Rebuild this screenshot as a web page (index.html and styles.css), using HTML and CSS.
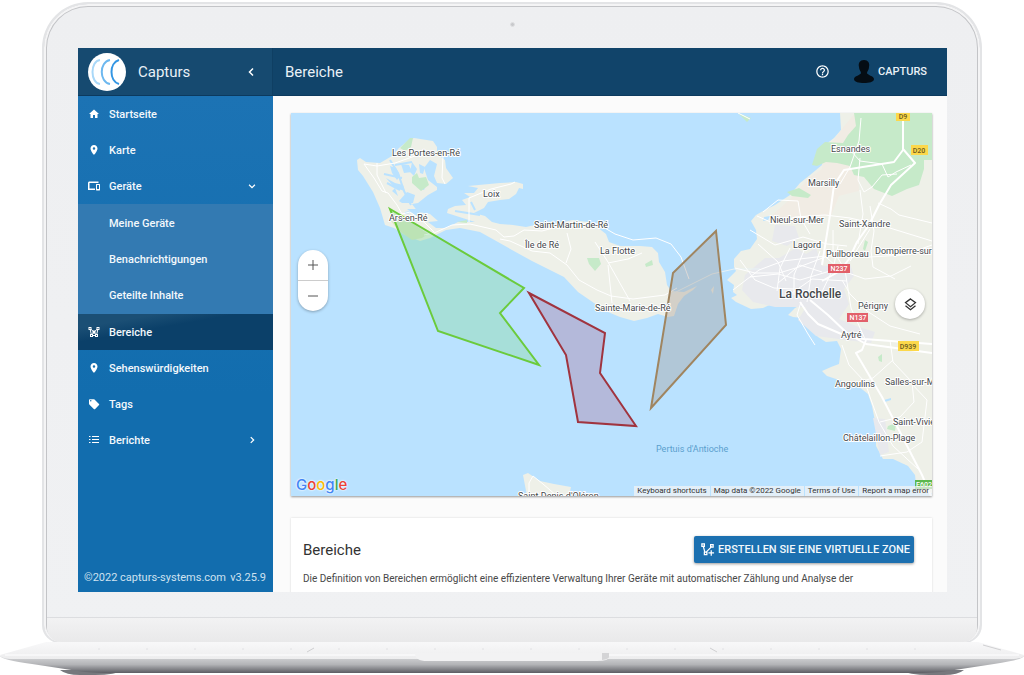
FILE: index.html
```html
<!DOCTYPE html>
<html lang="de">
<head>
  <meta charset="UTF-8">
  <title>Capturs - Bereiche</title>
  <link rel="stylesheet" href="styles.css">
</head>
<body>
  <div class="laptop">
    <div class="lid">
      <div class="camera"></div>
      <div class="screen">
        <header class="brand">
          <svg class="logo" viewBox="0 0 38 38">
            <circle cx="19" cy="19" r="19" fill="#fff"/>
            <g fill="none" stroke-width="2">
              <path d="M12 7C2 8 2 30 12 31" stroke="#a9d8f8"/>
              <path d="M22 7C11 9 11 29 22 31" stroke="#6db8ef"/>
              <path d="M31 7C21 10 21 28 31 31" stroke="#3496e3"/>
            </g>
          </svg>
          <span class="brand-name">Capturs</span>
          <button type="button" class="icon-btn" aria-label="Menü einklappen">
            <svg class="icon" viewBox="0 0 24 24"><path d="M16 5l-7 7 7 7" class="line"/></svg>
          </button>
        </header>

        <header class="topbar">
          <h1>Bereiche</h1>
          <button type="button" class="icon-btn help" aria-label="Hilfe">
            <svg viewBox="0 0 24 24"><path d="M11 18h2v-2h-2v2zm1-16C6.480 2 2 6.480 2 12s4.480 10 10 10 10-4.480 10-10S17.520 2 12 2zm0 18c-4.410 0-8-3.590-8-8s3.590-8 8-8 8 3.590 8 8-3.590 8-8 8zm0-14c-2.210 0-4 1.790-4 4h2c0-1.100.9-2 2-2s2 .9 2 2c0 2-3 1.750-3 5h2c0-2.250 3-2.500 3-5 0-2.210-1.790-4-4-4z"/></svg>
          </button>
          <a href="#" class="user">
            <svg viewBox="0 0 20 24"><path d="M10 0c4 0 6 3 5 7 0 3-2 4-2 6 0 2 7 3 7 6 0 3-5 4-10 4S0 22 0 19c0-3 7-4 7-6 0-2-2-3-2-6-1-4 1-7 5-7z"/></svg>
            CAPTURS
          </a>
        </header>

        <aside class="sidebar">
          <nav>
            <a href="#" class="item">
              <svg class="icon" viewBox="0 0 24 24"><path d="M10 20v-6h4v6h5v-8h3L12 3 2 12h3v8z"/></svg>
              <span>Startseite</span>
            </a>
            <a href="#" class="item">
              <svg class="icon" viewBox="0 0 24 24"><path d="M12 2C8.130 2 5 5.130 5 9c0 5.250 7 13 7 13s7-7.750 7-13c0-3.870-3.130-7-7-7zm0 9.500a2.500 2.500 0 0 1 0-5 2.500 2.500 0 0 1 0 5z"/></svg>
              <span>Karte</span>
            </a>
            <button type="button" class="item">
              <svg class="icon" viewBox="0 0 24 24"><path d="M3 6h18V3H3c-1.700 0-3 1.300-3 3v14h14v-3H3V6zm20 2h-6c-.5 0-1 .5-1 1v11c0 .5.500 1 1 1h6c.5 0 1-.5 1-1V9c0-.5-.5-1-1-1zm-1 10h-4v-8h4v8z"/></svg>
              <span>Geräte</span>
              <svg class="arrow" viewBox="0 0 24 24"><path d="M5 9l7 7 7-7" class="line"/></svg>
            </button>
            <div class="submenu">
              <a href="#" class="item">Meine Geräte</a>
              <a href="#" class="item">Benachrichtigungen</a>
              <a href="#" class="item">Geteilte Inhalte</a>
            </div>
            <a href="#" class="item active">
              <svg class="icon" viewBox="0 0 24 24"><path d="M4 5l3 14h10l3-14M4 5l8 7 8-7M7 19l5-7 5 7" fill="none" stroke="#fff" stroke-width="2"/><path d="M1 2h6v6H1zM17 2h6v6h-6zM4 16h6v6H4zM14 16h6v6h-6zM9 9h6v6H9z"/><path d="M3 4h2v2H3zM19 4h2v2h-2zM6 18h2v2H6zM16 18h2v2h-2z" fill="#0b4069"/></svg>
              <span>Bereiche</span>
            </a>
            <a href="#" class="item">
              <svg class="icon" viewBox="0 0 24 24"><path d="M12 2C8.130 2 5 5.130 5 9c0 5.250 7 13 7 13s7-7.750 7-13c0-3.870-3.130-7-7-7zm0 9.500a2.500 2.500 0 0 1 0-5 2.500 2.500 0 0 1 0 5z"/></svg>
              <span>Sehenswürdigkeiten</span>
            </a>
            <a href="#" class="item">
              <svg class="icon" viewBox="0 0 24 24"><path d="M22 12l-9-9c-.4-.4-.9-.6-1.400-.6H4c-1.100 0-2 .9-2 2v7c0 .5.200 1 .6 1.400l9 9c.8.8 2 .8 2.800 0l7.600-7.600c.7-.7.7-1.500 0-2.200zM5.500 7a1.500 1.500 0 1 1 0-3 1.500 1.500 0 0 1 0 3z"/></svg>
              <span>Tags</span>
            </a>
            <button type="button" class="item">
              <svg class="icon" viewBox="0 0 24 24"><path d="M2 4h3v2H2zM2 10h3v2H2zM2 16h3v2H2zM8 4h14v2H8zM8 10h14v2H8zM8 16h14v2H8z"/></svg>
              <span>Berichte</span>
              <svg class="arrow" viewBox="0 0 24 24"><path d="M9 5l7 7-7 7" class="line"/></svg>
            </button>
          </nav>
          <footer class="copyright">
            <span>©2022 capturs-systems.com</span>
            <span>v3.25.9</span>
          </footer>
        </aside>

        <main>
          <div class="map">
            <svg class="map-tiles" viewBox="291 113 641 383" preserveAspectRatio="xMidYMid slice">
              <!-- mainland -->
              <path class="land" d="M840 113l1 17-7 8-9 7-3 20-12 10-10 8-10 12-15 10-10 5-9 5-5 6 5 9 1 9-7 10-9 2-7 8v8l2 4-9 9 7 5-1 7 4 3-6 3 5 4 15 7 12-1 13-6 14-4 12-1-1 8-6 3-7 7 5 2 9 1 9 11 7 8 8 5 11-1 4 8-2 15-8 3-9 4 5 5 12 4 19 6 10 8 4 12 4 20v20l7 13h10l15 7 7 9 2 18h18V113z"/>
              <path class="beach" d="M841 130l14-17h7l-8 28 4 25 1 25-20 5-8 20-25 2-37 0 20-18 20-22 13-9 2-16z"/>
              <path class="green" d="M854 113h78v47l-8 0 0 9-5 16-12 4-15 7-18-7-10-12-10-2-4-9-13-3-11-1-9 4-5-1 5-16 8-7 18 1 5-8 8-9z"/>
              <path class="green" d="M787 192l12-4 12 7-3 3-16-2zM865 240l3 2-3 9-2-2zM888 426l8-3-1 8-8-2zM878 357l4-3v8l-3-1zM738 113l13 5-4 4zM805 284l5 4-4 6z"/>
              <path class="town" d="M745 275l20-17 14 0 17-10 10 6 10-6 6 18 28-2 4 12-10 13 5 15-10 15 20 8 16 5-4 11-25-3-30-4-18-16 8-13-31 0-22-5-11-12zM775 225l20 1 4 12-12 8-15-5zM873 418l12 1 4 33-9 3z"/>
              <path class="water" d="M764 217l6-1-2 4-5 1zM884 400l7-2v2l-6 2zM814 342l6-1 1 3-5 1zM903 464l4 2-1 3-4-1zM900 472l8 6 3 8-6-7z"/>

              <!-- Île de Ré -->
              <path class="land" d="M357 160L360 158L366 162L380 163L392 156L399 148L409 140L414 138L433 141L437 147L437 154L445 160L446 168L453 178L446 184L437 183L434 176L437 164L430 160L424 168L428 180L437 187L437 190L428 195L418 203L412 204L418 212L430 214L438 221L428 222L436 228L446 228L458 222L475 222L447 213L448 209L455 206L466 205L462 200L470 197L464 193L474 193L478 188L468 186L500 183L516 182L523 184L523 189L519 188L516 194L509 199L500 200L488 202L484 208L474 213L485 216L492 222L500 224L513 225L526 227L535 225L560 223L572 220L588 222L597 227L606 234L609 242L620 246L640 246L652 247L658 253L659 262L665 272L667 285L671 291L684 292L697 286L693 290L684 296L678 304L674 316L668 317L658 314L647 318L634 321L620 317L608 312L594 303L578 292L564 277L548 269L532 261L512 250L498 242L480 232L460 228L446 230L430 238L420 241L405 235L394 228L385 225L380 208L373 192L363 176L358 170Z"/>
              <path class="water" d="M390 166l6 2 4 8-3 4-5-7zM401 164l8 1 3 7-8 1zM386 178l9 5 8 2 2 6-10-3zM412 162l5 7-3 7-4-4zM419 164l6 3-2 7-3-1zM399 201l8-9 8 3-2 8-11 0zM407 209l9 0 5 5 7 4-3 2-10-5zM395 188l3 8-6-5zM416 183l4-4 3 6 4-2-3 7-6-2z"/>
              <path class="sea-line" d="M390 160l8 13 6 18 7 14M384 174l18 4M395 165l17-3M400 190l-13-7M405 213l20-4M455 211l25 4M471 202l4 8"/>
              <path class="green" d="M400 148l10-10h3l-2 9-6 4zM412 177l5-4 2 5 7-1 3 8-8 6-9-8zM587 258l12 0 2 6-6 7-6-7zM645 264l7-4 1 5-7 2zM457 222l10-2v3z"/>
              <path class="forest" d="M391 221l20 1 17 12-6 4-10 2-14-10z"/>
              <path class="land" d="M711 290l3-4-1 8z"/>
              <!-- Oléron -->
              <path class="land" d="M523 475l5-2 12 8 14 3 17 3-2 9h-42z"/>

              <!-- roads -->
              <g class="road">
                <path d="M364 164l13 2 18-3 20-7 30-2M364 164l10 14 8 13 6 2 9 12 5 9 8-2 15 11 9 9M424 235l10-2 18-8 18-1 26 6 8 7 10-1 10-6 18 1 15-4 20-4 21 1 17 10 18 6 23-2 15 6 10 13 8 22"/>
                <path d="M443 156l-1 22 3 6M469 222v-24l22-9 20-5 4-2M377 163v12l9 18M500 239l10 2 22 10 18 2 17 12 12 15 18 10 14 6 22 3 32-4 12-7M567 233l4 16-5 14M595 242l13 20 22 39M608 265l4 38M608 263l20-4 14-6"/>
                <path class="bridge" d="M672 294l20-10 20-10 22-5 26 0"/>
                <path class="wide" d="M903 118v32l-9 12-50 8-10 15-4 30-8 50"/>
                <path class="wide" d="M903 149l12 14-24 22-12 20-10 20-12 17-8 17-9 12-18 10"/>
                <path d="M861 118l-2 23-9 26-10 17M850 150l10 11 22 3 6 13 8-5 15-7M860 158l-2 22 6 12 8-5 10-12 15-1M860 190l3 24-5 30"/>
                <path d="M750 230l25 15 28-8 24 7 20 2M757 216l18 8 20-7 30-2 25 3 30 7 52 16M763 212l15-12 20 1 3 18 9 15M878 203l13 6 8 6 33 8M870 206l4 25-3 20 2 16 22 12"/>
                <path d="M735 268l20 5 24 0 20-6 34-13 36 3 35-2 28-10M733 290l26-20 24-9 42-5 15 14 25 9 26-3 20-10M740 260l15 20 19 8 20 1M758 244l20 18 8 19M790 248l-10 20-3 23M805 248l-11 27 0 20M820 251l-9 25-4 26M838 246l-5 23-13 27M750 277l28-3 22 6 30-9M792 293l20-14 35 2M778 283l22-18 22 7M870 229l-20 32M833 230l0 20 12 20"/>
                <path class="wide" d="M800 302l8 12 10 10 28 12 18 3 68 5M810 300l18 15 20 19 18 10 66 9"/>
                <path class="wide" d="M866 340l-4 10-6 3 10 17 16 27 22 43 18 35 9 21"/>
                <path d="M842 345l7 20 16 17 5 15 9 25 14 24 25 23M842 280l8 14 17 17 23 15 30 8M890 340l3 22 19 20 2 20-14 15-20 5M893 360l-20 18-14 4M880 456l27-4 15-10 5-42-17-18M845 270l6 38 14 31M801 302l-4 13 11 19 7 11"/>
                <path d="M738 113l12 6M529 496v-13l4-7 10 8 14 12"/>
              </g>

              <!-- zones -->
              <path class="zone zone-green" d="M390 209l134 79-24 25 39 52-101-34z"/>
              <path class="zone zone-red" d="M529 293l76 40-5 40 36 53-58-4-12-67z"/>
              <path class="zone zone-brown" d="M716 231l10 94-75 83 22-135z"/>

              <g class="label">
                <text x="392" y="156">Les Portes-en-Ré</text>
                <text x="389" y="221">Ars-en-Ré</text>
                <text x="483" y="197">Loix</text>
                <text x="534" y="228">Saint-Martin-de-Ré</text>
                <text x="525" y="248">Île de Ré</text>
                <text x="600" y="254">La Flotte</text>
                <text x="595" y="311">Sainte-Marie-de-Ré</text>
                <text x="518" y="499">Saint-Denis-d'Oléron</text>
                <text x="831" y="152">Esnandes</text>
                <text x="808" y="186">Marsilly</text>
                <text x="770" y="223">Nieul-sur-Mer</text>
                <text x="839" y="227">Saint-Xandre</text>
                <text x="793" y="248">Lagord</text>
                <text x="826" y="257">Puilboreau</text>
                <text x="875" y="254">Dompierre-sur-Mer</text>
                <text x="858" y="309">Périgny</text>
                <text x="841" y="338">Aytré</text>
                <text x="835" y="387">Angoulins</text>
                <text x="885" y="385">Salles-sur-Mer</text>
                <text x="893" y="425">Saint-Vivien</text>
                <text x="843" y="441">Châtelaillon-Plage</text>
                <text x="779" y="298" class="city">La Rochelle</text>
              </g>
              <text x="656" y="452" class="sea-name">Pertuis d'Antioche</text>

              <g class="shield">
                <path fill="#fcd84a" d="M896 112h14v9h-14zM911 145h17v10h-17zM898 341h21v10h-21z"/>
                <path fill="#e2606a" d="M828 264h22v9h-22zM847 313h21v9h-21z"/>
                <path fill="#5cb84e" d="M915 480h17v9h-17z"/>
                <text x="903" y="119">D9</text>
                <text x="919" y="153">D20</text>
                <text x="908" y="349">D939</text>
                <text x="839" y="271" class="light">N237</text>
                <text x="858" y="320" class="light">N137</text>
                <text x="924" y="487" class="light">E602</text>
              </g>
            </svg>

            <div class="zoom-control">
              <button type="button" aria-label="Vergrößern">
                <svg viewBox="0 0 10 10"><path d="M5 0v10M0 5h10"/></svg>
              </button>
              <button type="button" aria-label="Verkleinern">
                <svg viewBox="0 0 10 10"><path d="M0 5h10"/></svg>
              </button>
            </div>
            <button type="button" class="layers" aria-label="Ebenen">
              <svg viewBox="0 0 24 24"><path d="M12 3l8 6-8 6.500L4 9zM4 14l8 6.500L20 14" fill="none" stroke="#333" stroke-width="2"/></svg>
            </button>
            <span class="google"><i class="b">G</i><i class="r">o</i><i class="y">o</i><i class="b">g</i><i class="g">l</i><i class="r">e</i></span>
            <div class="map-credits">
              <button type="button">Keyboard shortcuts</button>
              <span>Map data ©2022 Google</span>
              <a href="#">Terms of Use</a>
              <a href="#">Report a map error</a>
            </div>
          </div>

          <section class="card">
            <div class="card-head">
              <h2>Bereiche</h2>
              <button type="button" class="create">
                <svg viewBox="0 0 24 24"><path d="M5 6l3 11M9 17l10-10M3 3h4v4H3zM17 4h4v4h-4zM7 16h4v4H7zM18 13v9M13.500 17.500h9" fill="none" stroke="#fff" stroke-width="2"/></svg>
                ERSTELLEN SIE EINE VIRTUELLE ZONE
              </button>
            </div>
            <p>Die Definition von Bereichen ermöglicht eine effizientere Verwaltung Ihrer Geräte mit automatischer Zählung und Analyse der</p>
          </section>
        </main>
      </div>
      <div class="hinge"></div>
    </div>

    <svg class="base" viewBox="0 0 1024 34" preserveAspectRatio="none">
      <defs>
        <linearGradient id="deck" x2="0" y2="1">
          <stop offset="0" stop-color="#f8f8f9"/>
          <stop offset="1" stop-color="#ededee"/>
        </linearGradient>
        <linearGradient id="front" x2="0" y2="1">
          <stop offset="0" stop-color="#d6d7d9"/>
          <stop offset=".5" stop-color="#b3b4b7"/>
          <stop offset="1" stop-color="#5c5d63"/>
        </linearGradient>
      </defs>
      <path fill="#77787d" d="M60 29h65q-10 5-30 5H80q-14 0-20-5zM899 29h65q-6 5-20 5h-15q-20 0-30-5z"/>
      <path fill="url(#front)" d="M0 15h1024q-2 4-30 8l-46 7q-12 2-38 2H116q-26 0-38-2l-46-7Q2 19 0 15z"/>
      <path fill="url(#deck)" d="M46 1h932l46 13q0 3-10 4H10q-10-1-10-4z"/>
      <path stroke="#e2e2e4" stroke-dasharray="2 46" d="M98 8h850"/>
      <path stroke="#d0d0d2" d="M307 11l7-4M710 7l7 4M983 4l18 5"/>
      <path stroke="#fff" d="M5 14h1014"/>
      <path fill="#f2f2f3" d="M415 12h194v4q0 4-12 4H427q-12 0-12-8z"/>
      <path fill="#d4d4d6" d="M602 12h7v4q0 2-7 3z"/>
    </svg>
  </div>
</body>
</html>
```

FILE: styles.css
```css
* {
  box-sizing: border-box;
}

body {
  margin: 0;
  background: #fff;
  font-family: Roboto, "Liberation Sans", sans-serif;
  color: #333;
}

button {
  font-family: inherit;
  border: 0;
  padding: 0;
  background: none;
  cursor: pointer;
}

a {
  color: inherit;
  text-decoration: none;
}

h1,
h2,
p {
  margin: 0;
}

svg {
  display: block;
}

.line {
  fill: none;
  stroke: #fff;
  stroke-width: 3;
}

/* laptop */
.laptop {
  padding-top: 2px;
}

.lid {
  margin: 0 42px;
  border: 2px solid #e3e4e6;
  border-bottom-width: 1px;
  border-radius: 46px 46px 18px 18px;
  padding: 0 33px 0 34px;
  background: linear-gradient(#eeeff1, #f0f1f3);
  box-shadow: inset 0 0 0 2px #f4f4f5, inset 0 0 0 3px #c3c4c7;
  overflow: hidden;
}

.camera {
  width: 5px;
  height: 5px;
  margin: 18px auto 21px;
  border-radius: 50%;
  background: #c8c9cc;
  border: 1px solid #dedfe1;
}

.screen {
  display: grid;
  grid-template-columns: 195px 1fr;
  grid-template-rows: 48px 1fr;
  aspect-ratio: 869 / 544;
  overflow: hidden;
  background: #fbfbfb;
}

.hinge {
  height: 25px;
  margin: 25px -30px 0 -31px;
  border-top: 1px solid #dcdde0;
  background: linear-gradient(#f2f2f3, #e9e9ea);
  border-radius: 0 0 14px 14px;
}

.base {
  width: 100%;
  height: 34px;
  margin-top: -2px;
  position: relative;
}

/* header */
.brand,
.topbar {
  display: flex;
  align-items: center;
  background: #11446a;
  color: #e9f1f7;
  border-bottom: 1px solid #0c3a5e;
}

.brand {
  padding: 0 15px 0 10px;
  background: #164a70;
  border-right: 1px solid #0f3f63;
}

.logo {
  width: 38px;
  height: 38px;
}

.brand-name {
  flex: 1;
  margin-left: 12px;
  font-size: 15px;
}

.icon-btn {
  fill: #fff;
}

.icon {
  width: 12px;
  height: 12px;
  fill: #fff;
}

.topbar {
  padding: 0 20px 0 12px;
}

.topbar h1 {
  flex: 1;
  font-size: 15px;
  font-weight: 400;
}

.help svg {
  width: 15px;
  height: 15px;
}

.user {
  display: flex;
  align-items: center;
  gap: 4px;
  margin-left: 24px;
  font-size: 11px;
  font-weight: 500;
}

.user svg {
  width: 20px;
  height: 24px;
  fill: #050d14;
}

/* sidebar */
.sidebar {
  display: flex;
  flex-direction: column;
  justify-content: space-between;
  min-height: 0;
  background: linear-gradient(#1c73b4, #126dae 60%);
  color: #f2f8fc;
}

.item {
  display: flex;
  align-items: center;
  gap: 9px;
  width: 100%;
  height: 36px;
  padding: 0 16px 0 10px;
  font-size: 11px;
  font-weight: 500;
  color: inherit;
  text-align: left;
}

.item .arrow {
  width: 10px;
  height: 10px;
  margin-left: auto;
}

.submenu {
  padding: 1px 0;
  background: #337ab2;
}

.submenu .item {
  padding-left: 31px;
}

.item.active {
  background: linear-gradient(170deg, #1b4f75 20%, #0b4069 40%);
}

.copyright {
  display: flex;
  justify-content: space-between;
  padding: 0 7px 8px 6px;
  font-size: 11px;
  line-height: 13px;
  color: #cfe2f0;
}

/* content */
main {
  min-width: 0;
  min-height: 0;
  padding: 17px 15px 0 18px;
}

.map {
  position: relative;
  height: 383px;
  overflow: hidden;
  background: #bae2ff;
  box-shadow: 0 1px 2px rgba(0, 0, 0, 0.4);
}

.map-tiles {
  width: 100%;
  height: 100%;
}

.land {
  fill: #eef0e8;
}

.beach {
  fill: #f1ece4;
}

.green {
  fill: #c6eac9;
}

.town {
  fill: #e8e9ed;
}

.water {
  fill: #bae2ff;
}

.sea-line {
  fill: none;
  stroke: #bae2ff;
  stroke-width: 2;
}

.forest {
  fill: #dde8c4;
}

.road {
  fill: none;
  stroke: #fff;
  stroke-width: 1;
  stroke-linejoin: round;
}

.road .wide {
  stroke-width: 2;
}

.road .bridge {
  stroke: #e8f2f5;
}

.zone {
  stroke-width: 2;
}

.zone-green {
  fill: rgba(140, 220, 160, 0.4);
  stroke: #6bcb3c;
}

.zone-red {
  fill: rgba(170, 110, 150, 0.35);
  stroke: #a0343f;
}

.zone-brown {
  fill: rgba(160, 150, 140, 0.35);
  stroke: #a08560;
}

.label {
  font-size: 9px;
  fill: #45484b;
  stroke: #fff;
  stroke-width: 2;
  stroke-linejoin: round;
  paint-order: stroke;
}

.label .city {
  font-size: 12px;
  font-weight: 500;
}

.sea-name {
  font-size: 9px;
  fill: #5b9fce;
}

.shield {
  font-size: 7px;
  font-weight: 500;
  text-anchor: middle;
  fill: #6a5a20;
}

.shield .light {
  fill: #fff;
}

.zoom-control {
  position: absolute;
  left: 7px;
  top: 137px;
  width: 30px;
  border-radius: 15px;
  background: #fff;
  box-shadow: 0 1px 3px rgba(0, 0, 0, 0.3);
}

.zoom-control button {
  display: grid;
  place-items: center;
  width: 100%;
  height: 30px;
}

.zoom-control button + button {
  height: 31px;
  border-top: 1px solid #ccc;
}

.zoom-control svg {
  width: 10px;
  height: 10px;
  stroke: #555;
}

.layers {
  position: absolute;
  right: 7px;
  top: 176px;
  display: grid;
  place-items: center;
  width: 30px;
  height: 30px;
  border-radius: 50%;
  background: #fff;
  box-shadow: 0 1px 3px rgba(0, 0, 0, 0.3);
}

.layers svg {
  width: 15px;
  height: 15px;
}

.google {
  position: absolute;
  left: 5px;
  bottom: 1px;
  font-family: Inter, sans-serif;
  font-size: 15px;
  font-weight: 500;
  line-height: 20px;
  text-shadow: 0 0 2px #fff, 0 0 2px #fff;
}

.google i {
  font-style: normal;
}

.google .b {
  color: #4285f4;
}

.google .r {
  color: #ea4335;
}

.google .y {
  color: #fbbc05;
}

.google .g {
  color: #34a853;
}

.map-credits {
  position: absolute;
  right: 0;
  bottom: 0;
  display: flex;
  gap: 1px;
}

.map-credits > * {
  padding: 0 3px;
  font-size: 8px;
  line-height: 10px;
  color: #333;
  background: rgba(245, 245, 245, 0.7);
}

.card {
  height: 120px;
  margin-top: 22px;
  padding: 18px 18px 0 12px;
  background: #fff;
  box-shadow: 0 0 2px rgba(0, 0, 0, 0.15);
}

.card-head {
  display: flex;
  align-items: center;
  justify-content: space-between;
  margin-bottom: 8px;
}

.card h2 {
  font-size: 15px;
  font-weight: 400;
}

.create {
  display: flex;
  align-items: center;
  gap: 3px;
  height: 27px;
  padding: 0 4px 0 6px;
  border-radius: 2px;
  background: #1c70b0;
  box-shadow: 0 1px 3px rgba(0, 0, 0, 0.4);
  font-size: 11px;
  font-weight: 500;
  color: #f2f8fc;
}

.create svg {
  width: 15px;
  height: 15px;
}

.card p {
  font-size: 10px;
  line-height: 16px;
  color: #484848;
}
```
